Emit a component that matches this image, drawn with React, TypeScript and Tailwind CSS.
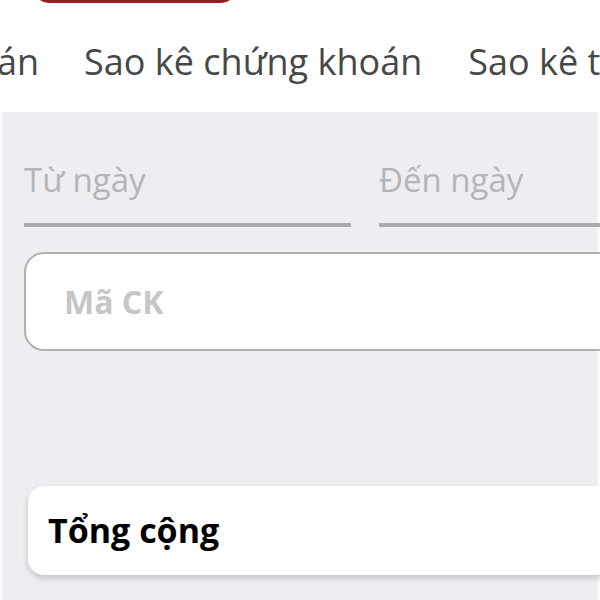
export default function App() {
  return (
    <div className="h-[600px] w-[600px] overflow-hidden bg-white font-['Open_Sans',sans-serif]">
      {/* top action + tabs */}
      <div className="relative h-[112px]">
        <div className="absolute left-[32px] top-[-40px] h-[43px] w-[206px] rounded-b-[18px] bg-[#9b1c22]" />
        <div className="flex whitespace-nowrap pt-[37px] text-[36px] leading-[50px] text-[#474747]">
          <span className="ml-[-3px]">án</span>
          <span className="ml-[45px]">Sao kê chứng khoán</span>
          <span className="ml-[46px]">Sao kê tiền</span>
        </div>
      </div>

      <div className="mx-[1px] h-[488px] border-x-2 border-[#f6f6f8] bg-[#eeeef2] pt-[44px]">
        <div className="flex gap-[28px] pl-[21px]">
          <div className="w-[327px] shrink-0">
            <div className="text-[33px] leading-[48px] text-[#b4b4b9]">Từ ngày</div>
            <div className="mt-[19px] h-[4px] bg-[#acacae]" />
          </div>
          <div className="w-[300px] shrink-0">
            <div className="text-[33px] leading-[48px] text-[#b4b4b9]">Đến ngày</div>
            <div className="mt-[19px] h-[4px] bg-[#acacae]" />
          </div>
        </div>

        <div className="ml-[21px] mt-[25px] flex h-[99px] w-[620px] items-center rounded-[20px] border-2 border-[#b0b0b2] bg-white pl-[38px]">
          <span className="text-[32px] font-bold text-[#c6c6c8]">Mã CK</span>
        </div>

        <div className="ml-[25px] mt-[135px] flex h-[89px] w-[620px] items-center rounded-[16px] bg-white pl-[20px] shadow-[0_3px_6px_rgba(0,0,0,0.18)]">
          <span className="text-[34px] font-bold text-black">Tổng cộng</span>
        </div>
      </div>
    </div>
  );
}
